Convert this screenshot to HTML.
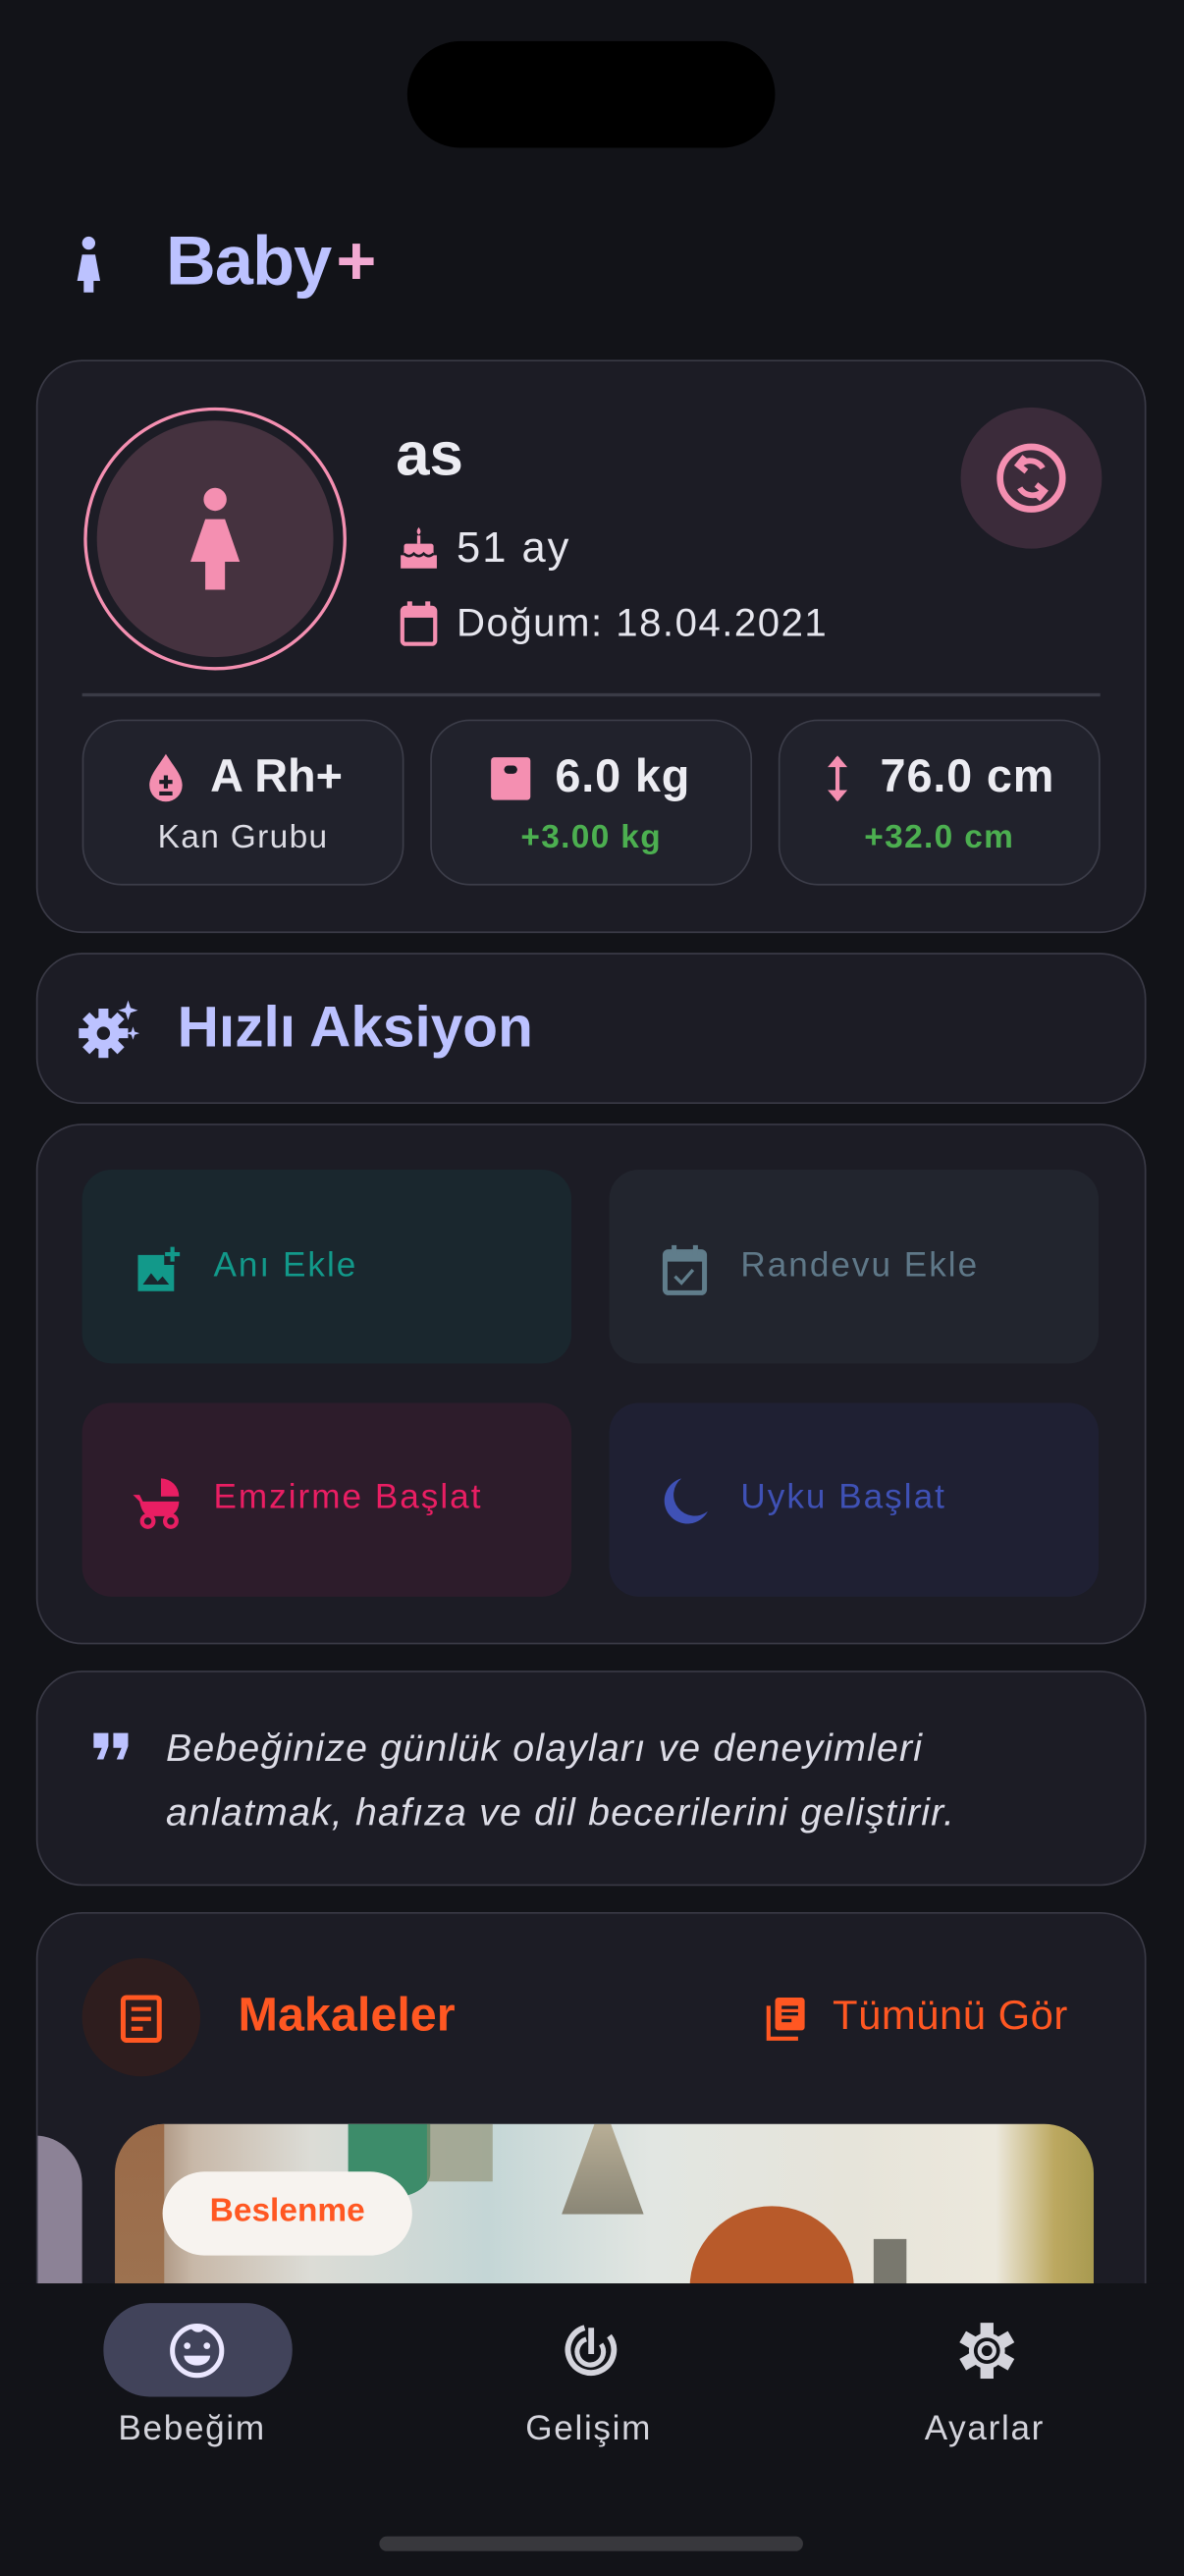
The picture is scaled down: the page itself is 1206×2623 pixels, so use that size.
<!DOCTYPE html>
<html><head><meta charset="utf-8">
<style>
html,body{margin:0;padding:0;background:#121318;width:1206px;height:2622px;overflow:hidden}
#s{position:absolute;left:0;top:0;width:721px;height:1568px;transform:scale(1.67268);transform-origin:0 0;font-family:"Liberation Sans",sans-serif;color:#e6e6ee}
.a{position:absolute}
.card{position:absolute;left:22px;width:676px;background:#1c1c25;border:1.5px solid #3a3a46;border-radius:28px;box-sizing:border-box}
.stat{position:absolute;top:438px;width:196px;height:101px;background:#21222c;border:1.5px solid #3c3d49;border-radius:24px;box-sizing:border-box}
.btn{position:absolute;width:298px;height:118px;border-radius:18px}
.bt{position:absolute;font-size:21px;letter-spacing:1.2px}
.lbl{position:absolute;top:1467px;font-size:21px;color:#d4d4dc;letter-spacing:1px}
</style></head><body><div id="s">
<div class="a" style="left:248px;top:25px;width:224px;height:65px;border-radius:33px;background:#000"></div>

<svg class="a" style="left:44px;top:143px" width="20" height="36" viewBox="0 0 20 36"><circle cx="10" cy="5" r="4" fill="#bcc2ff"/><path d="M6 12h8l3 16h-4v7h-6v-7h-4z" fill="#bcc2ff"/></svg>
<div class="a" style="left:101px;top:135px;font-size:42px;font-weight:bold;color:#bcc2ff;letter-spacing:-0.5px">Baby<span style="color:#f2a9d2;margin-left:3px">+</span></div>

<div class="card" style="top:219px;height:349px"></div>
<div class="a" style="left:51px;top:248px;width:160px;height:160px;border-radius:50%;border:2.5px solid #f48fb1;box-sizing:border-box"></div>
<div class="a" style="left:59px;top:256px;width:144px;height:144px;border-radius:50%;background:#45323f"></div>
<svg class="a" style="left:112px;top:296px" width="38" height="64" viewBox="0 0 38 64"><circle cx="19" cy="8" r="7" fill="#f48fb1"/><path d="M13 20h12l9 26h-9v17h-12v-17h-9z" fill="#f48fb1"/></svg>
<div class="a" style="left:241px;top:256px;font-size:37px;font-weight:bold;color:#ececf2">as</div>
<svg class="a" style="left:243px;top:319px" width="24" height="28" viewBox="0 0 24 28"><path d="M12 2c1.5 2 1.5 3.5 0 4.5C10.5 5.5 10.5 4 12 2z" fill="#f48fb1"/><rect x="11" y="7" width="2" height="5" fill="#f48fb1"/><rect x="3" y="12" width="18" height="7" rx="1.5" fill="#f48fb1"/><rect x="1" y="19" width="22" height="8" fill="#f48fb1"/><path d="M3 18c2 2 4 2 6 0 2 2 4 2 6 0 2 2 4 2 6 0" stroke="#1c1c25" stroke-width="1.5" fill="none"/></svg>
<div class="a" style="left:278px;top:318px;font-size:26px;color:#e6e6ee;letter-spacing:1.2px">51 ay</div>
<svg class="a" style="left:243px;top:366px" width="24" height="28" viewBox="0 0 24 28"><rect x="2" y="4" width="20" height="22" rx="2" fill="none" stroke="#f48fb1" stroke-width="2.5"/><rect x="2" y="4" width="20" height="6" fill="#f48fb1"/><rect x="5" y="0" width="3" height="5" fill="#f48fb1"/><rect x="16" y="0" width="3" height="5" fill="#f48fb1"/></svg>
<div class="a" style="left:278px;top:366px;font-size:24px;color:#e6e6ee;letter-spacing:0.9px">Doğum: 18.04.2021</div>
<div class="a" style="left:585px;top:248px;width:86px;height:86px;border-radius:50%;background:#3b2b3a"></div>
<svg class="a" style="left:604px;top:267px" width="48" height="48" viewBox="0 0 48 48"><circle cx="24" cy="24" r="19" fill="none" stroke="#f48fb1" stroke-width="4"/><path d="M31 18a9 9 0 0 0-14-2" stroke="#f48fb1" stroke-width="3.5" fill="none"/><path d="M20 11l-4 5 5 4" stroke="#f48fb1" stroke-width="3.5" fill="none"/><path d="M17 30a9 9 0 0 0 14 2" stroke="#f48fb1" stroke-width="3.5" fill="none"/><path d="M28 37l4-5-5-4" stroke="#f48fb1" stroke-width="3.5" fill="none"/></svg>
<div class="a" style="left:50px;top:422px;width:620px;height:2px;background:#3a3b46"></div>

<div class="stat" style="left:50px"></div>
<svg class="a" style="left:88px;top:458px" width="26" height="32" viewBox="0 0 26 32"><path d="M13 1C8 9 3 14 3 20a10 10 0 0 0 20 0C23 14 18 9 13 1z" fill="#f48fb1"/><path d="M13 14v8M9 18h8M9 25h8" stroke="#1c1c25" stroke-width="2.5"/></svg>
<div class="a" style="left:128px;top:457px;font-size:28px;font-weight:bold;color:#ececf2">A Rh+</div>
<div class="a" style="left:50px;top:499px;width:196px;text-align:center;font-size:20px;color:#dcdce4;letter-spacing:0.8px">Kan Grubu</div>
<div class="stat" style="left:262px"></div>
<svg class="a" style="left:298px;top:460px" width="26" height="28" viewBox="0 0 26 28"><rect x="1" y="1" width="24" height="26" rx="2" fill="#f48fb1"/><rect x="9" y="6" width="8" height="5" rx="2.5" fill="#1c1c25"/></svg>
<div class="a" style="left:338px;top:457px;font-size:28px;font-weight:bold;color:#ececf2;letter-spacing:0.5px">6.0 kg</div>
<div class="a" style="left:262px;top:499px;width:196px;text-align:center;font-size:20px;font-weight:bold;color:#4caf50;letter-spacing:0.8px">+3.00 kg</div>
<div class="stat" style="left:474px"></div>
<svg class="a" style="left:502px;top:458px" width="16" height="32" viewBox="0 0 16 32"><path d="M8 3v26" stroke="#f48fb1" stroke-width="2.5"/><path d="M2 9l6-7 6 7zM2 23l6 7 6-7z" fill="#f48fb1"/></svg>
<div class="a" style="left:536px;top:457px;font-size:28px;font-weight:bold;color:#ececf2;letter-spacing:0.5px">76.0 cm</div>
<div class="a" style="left:474px;top:499px;width:196px;text-align:center;font-size:20px;font-weight:bold;color:#4caf50;letter-spacing:0.8px">+32.0 cm</div>

<div class="card" style="top:580px;height:92px"></div>
<svg class="a" style="left:46px;top:608px" width="40" height="38" viewBox="0 0 40 38"><g fill="#bcc2ff"><circle cx="17" cy="21" r="10"/><g transform="translate(17 21)"><rect x="-3" y="-15" width="6" height="30"/><rect x="-3" y="-15" width="6" height="30" transform="rotate(45)"/><rect x="-3" y="-15" width="6" height="30" transform="rotate(90)"/><rect x="-3" y="-15" width="6" height="30" transform="rotate(135)"/></g><path d="M32 1l1.5 4.5L38 7l-4.5 1.5L32 13l-1.5-4.5L26 7l4.5-1.5z"/><path d="M35 17l1 3 3 1-3 1-1 3-1-3-3-1 3-1z"/></g><circle cx="17" cy="21" r="4" fill="#1c1c25"/></svg>
<div class="a" style="left:108px;top:606px;font-size:35px;font-weight:bold;color:#bcc2ff">Hızlı Aksiyon</div>

<div class="card" style="top:684px;height:317px"></div>
<div class="btn" style="left:50px;top:712px;background:#1a272e"></div>
<svg class="a" style="left:82px;top:758px" width="30" height="30" viewBox="0 0 30 30"><path d="M2 6h16v6h6v16H2z" fill="#12998a"/><path d="M5 24l5-7 4 5 3-3 4 5z" fill="#1a272e"/><path d="M23 1v9M18.5 5.5h9" stroke="#12998a" stroke-width="2.5"/></svg>
<div class="bt" style="left:130px;top:759px;color:#12998a">Anı Ekle</div>
<div class="btn" style="left:371px;top:712px;background:#22252e"></div>
<svg class="a" style="left:403px;top:757px" width="30" height="32" viewBox="0 0 30 32"><rect x="2" y="5" width="24" height="25" rx="2" fill="none" stroke="#607d8b" stroke-width="3"/><rect x="2" y="5" width="24" height="6" fill="#607d8b"/><rect x="6" y="1" width="3" height="6" fill="#607d8b"/><rect x="19" y="1" width="3" height="6" fill="#607d8b"/><path d="M8 20l4 4 7-8" stroke="#607d8b" stroke-width="2" fill="none"/></svg>
<div class="bt" style="left:451px;top:759px;color:#5f7888">Randevu Ekle</div>
<div class="btn" style="left:50px;top:854px;background:#2d1c2b"></div>
<svg class="a" style="left:80px;top:899px" width="32" height="32" viewBox="0 0 32 32"><path d="M18 1a11 11 0 0 1 11 11H18z" fill="#e91e63"/><path d="M1 11h4l2 4h22c0 5-3 9-8 9H12c-4 0-6-4-7-9" fill="#e91e63"/><circle cx="10" cy="27" r="3.5" fill="none" stroke="#e91e63" stroke-width="2.5"/><circle cx="24" cy="27" r="3.5" fill="none" stroke="#e91e63" stroke-width="2.5"/></svg>
<div class="bt" style="left:130px;top:900px;color:#e91e63">Emzirme Başlat</div>
<div class="btn" style="left:371px;top:854px;background:#1f2033"></div>
<svg class="a" style="left:401px;top:898px" width="32" height="32" viewBox="0 0 32 32"><path d="M14 2A14 14 0 1 0 30 22 12 12 0 0 1 14 2z" fill="#3f51b5"/></svg>
<div class="bt" style="left:451px;top:900px;color:#3f51b5">Uyku Başlat</div>

<div class="card" style="top:1017px;height:131px"></div>
<svg class="a" style="left:56px;top:1054px" width="24" height="18" viewBox="0 0 24 18"><path d="M1 1h9v8l-3 8H3l3-7H1zM13 1h9v8l-3 8h-4l3-7h-5z" fill="#bcc2ff"/></svg>
<div class="a" style="left:101px;top:1045px;font-size:23.5px;font-style:italic;color:#dcdce6;line-height:39px;letter-spacing:0.7px">Bebeğinize günlük olayları ve deneyimleri<br>anlatmak, hafıza ve dil becerilerini geliştirir.</div>

<div class="card" style="top:1164px;height:300px;overflow:hidden">
  <div class="a" style="left:-2px;top:135px;width:29px;height:200px;background:#8c8296;border-radius:0 30px 0 0"></div>
  <div class="a" style="left:47px;top:128px;width:596px;height:200px;border-radius:30px 30px 0 0;overflow:hidden;background:linear-gradient(90deg,#8a6a50 0%,#c8b8a8 8%,#dcdcd6 20%,#c4d6d6 38%,#e2e6e2 55%,#e6e4da 75%,#ece8dc 90%,#bca860 96%,#a89a50 100%)">
    <div class="a" style="left:0;top:0;width:30px;height:200px;background:linear-gradient(#9a6a48,#a07a58)"></div>
    <div class="a" style="left:142px;top:0;width:50px;height:45px;background:#3d8c6a;border-radius:0 0 25px 25px/0 0 15px 15px"></div>
    <div class="a" style="left:272px;top:0;width:50px;height:55px;background:linear-gradient(#b8ae96,#8a8676);clip-path:polygon(40% 0,60% 0,100% 100%,0 100%)"></div>
    <div class="a" style="left:190px;top:0;width:40px;height:35px;background:#8c8a6a;opacity:.6"></div>
    <div class="a" style="left:350px;top:50px;width:100px;height:150px;background:#b85a2a;border-radius:55px 55px 0 0"></div>
    <div class="a" style="left:356px;top:110px;width:55px;height:90px;background:#e8c6b0;border-radius:30px 0 0 0"></div>
    <div class="a" style="left:462px;top:70px;width:20px;height:100px;background:#4a4a40;opacity:.7"></div>
  </div>
  <div class="a" style="left:76px;top:157px;width:152px;height:51px;border-radius:26px;background:#f7f3ef"></div>
  <div class="a" style="left:76px;top:170px;width:152px;text-align:center;font-size:20px;font-weight:bold;color:#ff5722">Beslenme</div>
</div>
<div class="a" style="left:50px;top:1192px;width:72px;height:72px;border-radius:50%;background:#2e1d1e"></div>
<svg class="a" style="left:73px;top:1214px" width="28" height="30" viewBox="0 0 28 30"><rect x="2" y="2" width="22" height="26" rx="2" fill="none" stroke="#ff5722" stroke-width="3"/><path d="M7 9h12M7 15h12M7 21h7" stroke="#ff5722" stroke-width="2.5"/></svg>
<div class="a" style="left:145px;top:1211px;font-size:29px;font-weight:bold;color:#ff5722">Makaleler</div>
<svg class="a" style="left:465px;top:1215px" width="26" height="28" viewBox="0 0 26 28"><rect x="7" y="1" width="18" height="20" rx="2" fill="#ff5722"/><path d="M11 7h10M11 11h10M11 15h6" stroke="#1c1c25" stroke-width="2"/><path d="M3 6v20h18" stroke="#ff5722" stroke-width="2.5" fill="none"/></svg>
<div class="a" style="left:507px;top:1213px;font-size:25px;color:#ff5722;letter-spacing:0.3px">Tümünü Gör</div>

<div class="a" style="left:0;top:1390px;width:721px;height:178px;background:#121318"></div>
<div class="a" style="left:63px;top:1402px;width:115px;height:57px;border-radius:28px;background:#41435a"></div>
<svg class="a" style="left:98px;top:1413px" width="44" height="36" viewBox="0 0 44 36"><circle cx="22" cy="18" r="15" fill="none" stroke="#ebe7ff" stroke-width="3"/><path d="M19 3c2 3 6 3 6 0" stroke="#ebe7ff" stroke-width="3" fill="none"/><circle cx="16" cy="15" r="2" fill="#ebe7ff"/><circle cx="28" cy="15" r="2" fill="#ebe7ff"/><path d="M14 21h16a8 6 0 0 1-16 0z" fill="#ebe7ff"/></svg>
<svg class="a" style="left:341px;top:1413px" width="38" height="38" viewBox="0 0 38 38"><path d="M15 4A14 14 0 1 0 30 9" stroke="#d4d4dc" stroke-width="3.5" fill="none"/><path d="M16 11a8 8 0 1 0 9 3" stroke="#d4d4dc" stroke-width="3" fill="none"/><path d="M19 4v16" stroke="#d4d4dc" stroke-width="3.5"/></svg>
<svg class="a" style="left:582px;top:1412px" width="38" height="38" viewBox="0 0 38 38"><g transform="translate(19 19)" fill="#d4d4dc"><circle r="11"/><rect x="-4" y="-17" width="8" height="34"/><rect x="-4" y="-17" width="8" height="34" transform="rotate(60)"/><rect x="-4" y="-17" width="8" height="34" transform="rotate(120)"/></g><circle cx="19" cy="19" r="8" fill="#121318"/><circle cx="19" cy="19" r="4.5" fill="none" stroke="#d4d4dc" stroke-width="2.5"/></svg>
<div class="lbl" style="left:72px">Bebeğim</div>
<div class="lbl" style="left:320px">Gelişim</div>
<div class="lbl" style="left:563px">Ayarlar</div>
<div class="a" style="left:231px;top:1544px;width:258px;height:9px;border-radius:5px;background:#38383d"></div>
</div></body></html>
